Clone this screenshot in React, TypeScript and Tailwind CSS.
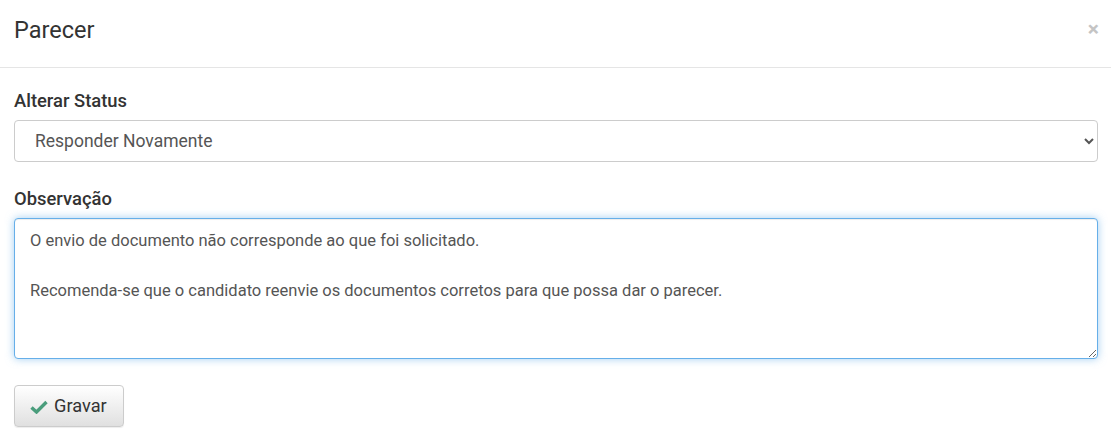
import { useState } from 'react';

const TEXT =
  'O envio de documento não corresponde ao que foi solicitado.\n\nRecomenda-se que o candidato reenvie os documentos corretos para que possa dar o parecer.';

export default function App() {
  const [status, setStatus] = useState('responder');
  const [obs, setObs] = useState(TEXT);

  return (
    <div
      className="h-[430px] w-[1111px] bg-white text-[#333]"
      style={{ fontFamily: 'Roboto, "Liberation Sans", sans-serif' }}
    >
      {/* header */}
      <div className="flex h-[68px] items-center justify-between border-b border-[#e5e5e5] pb-[5px] pl-[14px] pr-[12px]">
        <h4 className="text-[23.5px] font-normal text-[#333]">Parecer</h4>
        <button className="-mt-[3px] text-[21px] font-bold leading-none text-[#c4c4c4]">×</button>
      </div>

      {/* body */}
      <div className="flex flex-col pl-[14px] pr-[13px] pt-[22px]">
        <label className="mb-[8px] text-[18.4px] font-medium leading-[22px] text-[#333]">Alterar Status</label>
        <select
          value={status}
          onChange={(e) => setStatus(e.target.value)}
          className="h-[42px] w-full rounded-[4px] border border-[#ccc] bg-white px-[16px] text-[17.5px] text-[#555] outline-none"
        >
          <option value="responder">Responder Novamente</option>
          <option value="aprovado">Aprovado</option>
          <option value="reprovado">Reprovado</option>
        </select>

        <label className="mb-[8px] mt-[26px] text-[18.4px] font-medium leading-[22px] text-[#333]">Observação</label>
        <textarea
          value={obs}
          onChange={(e) => setObs(e.target.value)}
          className="h-[141px] w-full rounded-[4px] border border-[#66afe9] bg-white px-[15px] pt-[9px] text-[16.5px] leading-[25px] text-[#555] shadow-[inset_0_1px_1px_rgba(0,0,0,0.075),0_0_8px_rgba(102,175,233,0.6)] outline-none"
        />

        <div className="mt-[26px]">
          <button className="flex h-[42px] items-center gap-[6px] rounded-[4px] border border-[#ccc] bg-gradient-to-b from-white to-[#e0e0e0] pl-[15px] pr-[16px] text-[18.2px] text-[#333] shadow-[inset_0_1px_0_rgba(255,255,255,0.15),0_1px_1px_rgba(0,0,0,0.075)]">
            <svg width="18" height="14" viewBox="0 0 18 14" className="mt-[2px]">
              <path d="M1.5 7.5 L6.5 12 L16.5 2" fill="none" stroke="#4a9d7c" strokeWidth="3.4" strokeLinecap="butt" strokeLinejoin="miter" />
            </svg>
            Gravar
          </button>
        </div>
      </div>
    </div>
  );
}
